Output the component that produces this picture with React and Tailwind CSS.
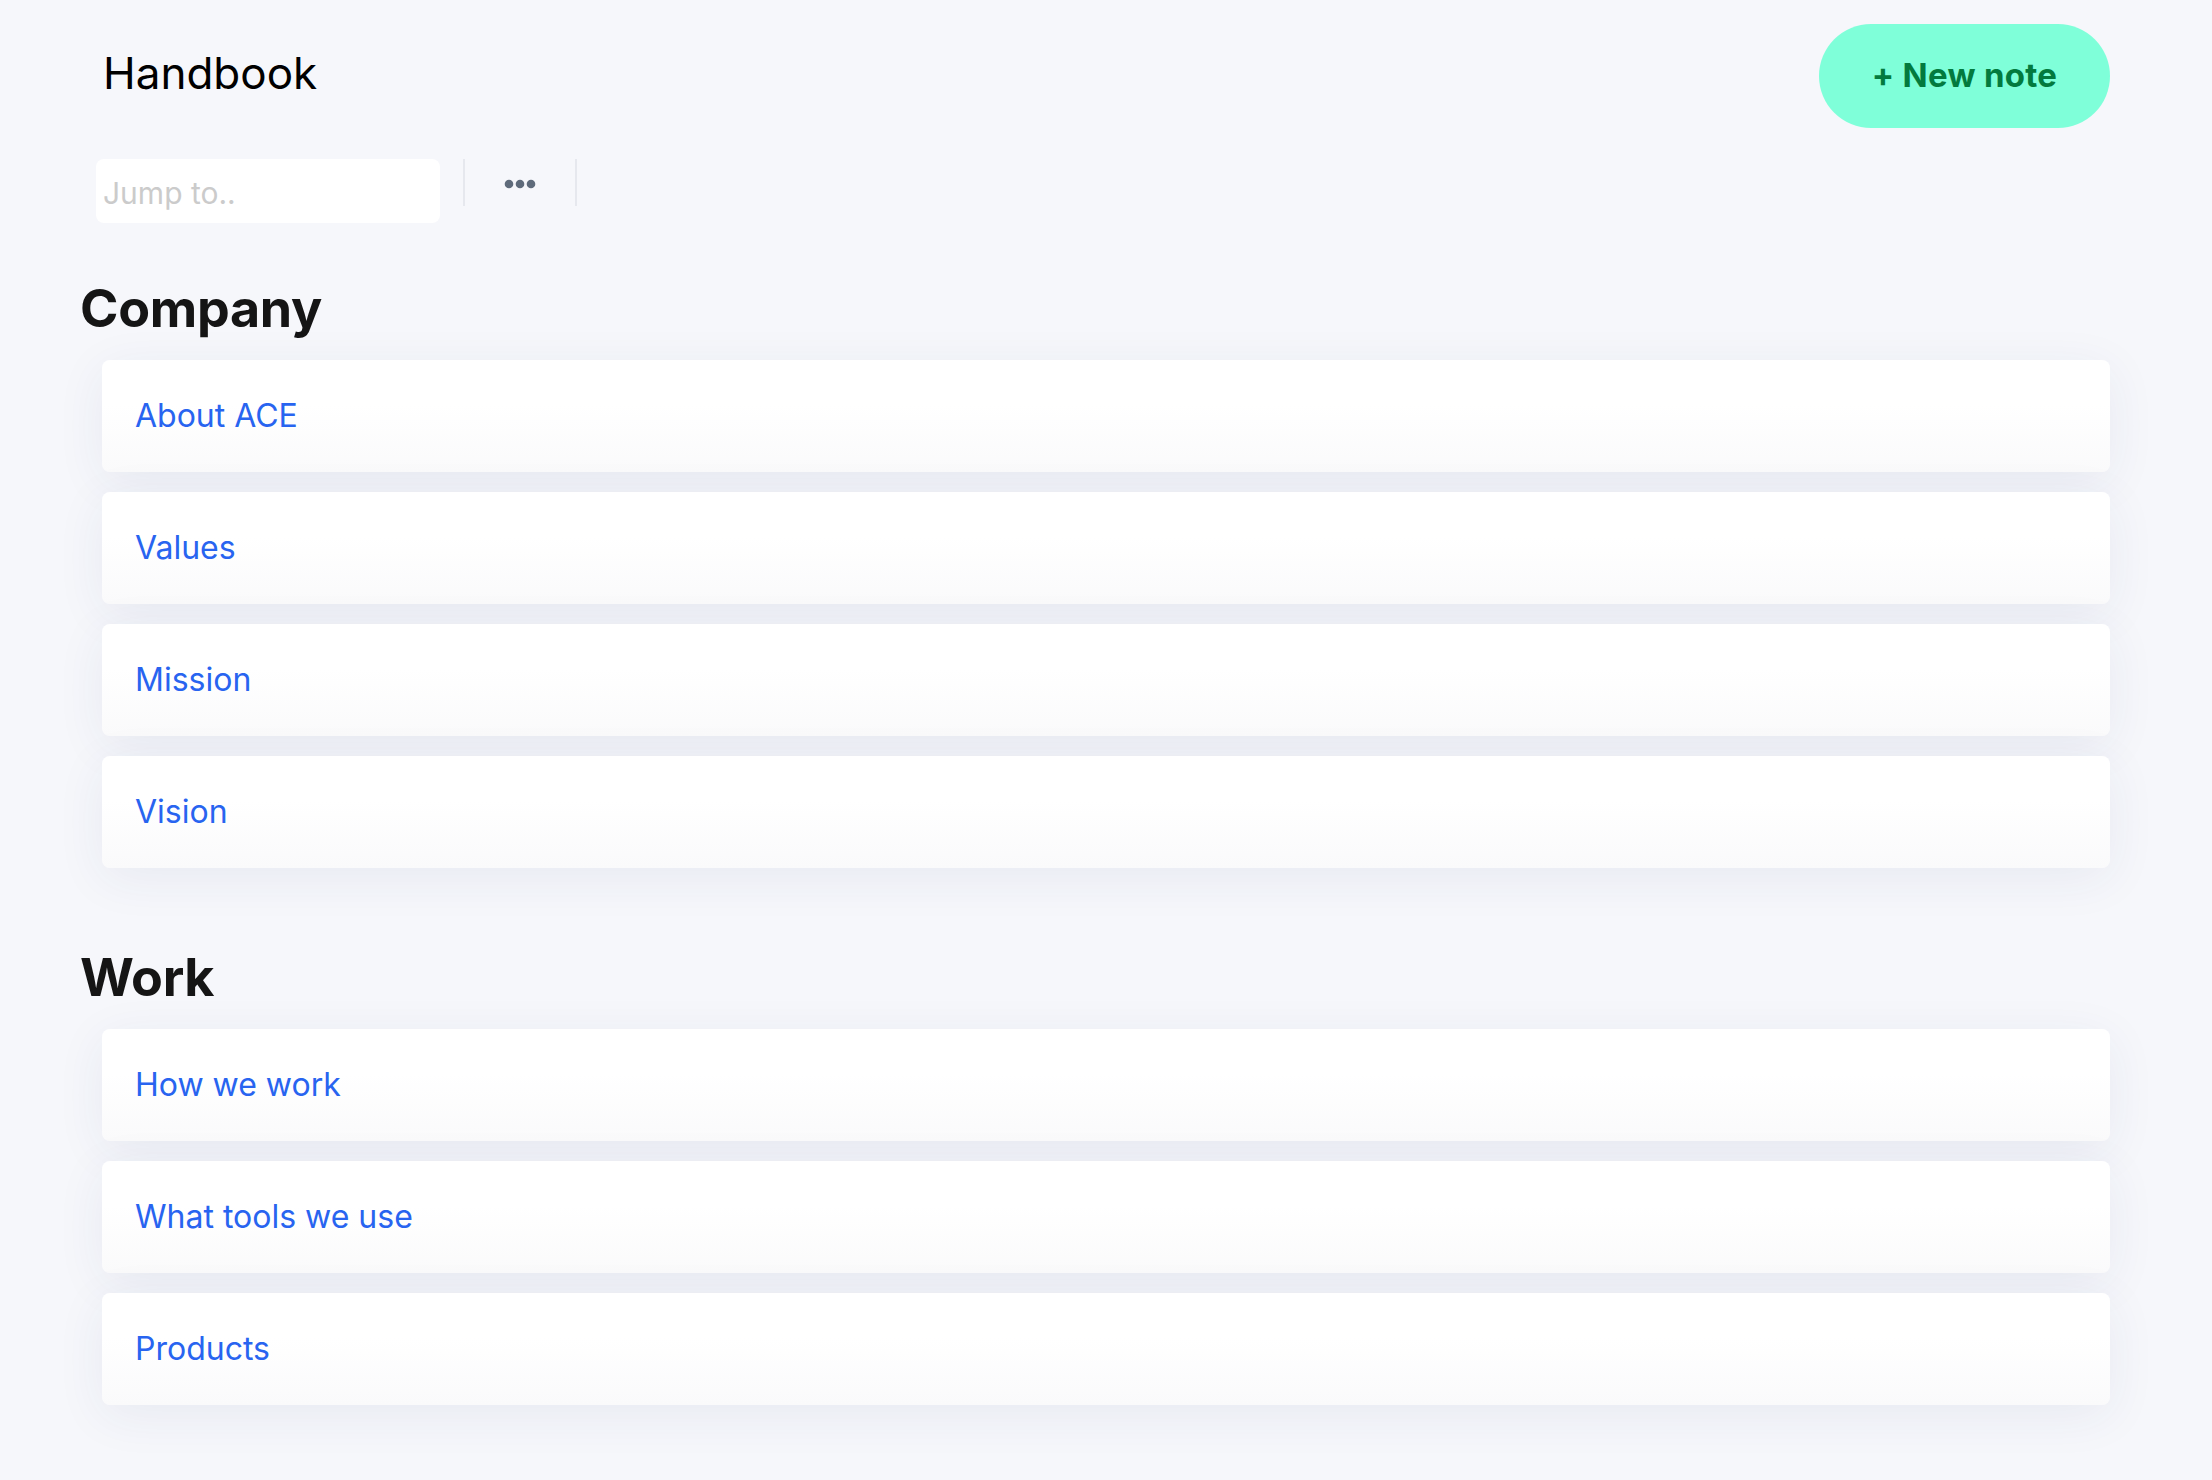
import React from "react";

const sections = [
  { title: "Company", notes: ["About ACE", "Values", "Mission", "Vision"] },
  { title: "Work", notes: ["How we work", "What tools we use", "Products"] },
];

function Dots() {
  return (
    <svg width="32" height="10" viewBox="0 0 32 10" fill="#5f6b7b">
      <circle cx="5" cy="5" r="4.3" />
      <circle cx="16" cy="5" r="4.3" />
      <circle cx="27" cy="5" r="4.3" />
    </svg>
  );
}

export default function App() {
  return (
    <div className="min-h-screen bg-[#f6f7fb] font-['Inter','Noto_Sans',sans-serif]">
      <div className="px-[102px] pt-[24px] pb-[74px]">
        {/* header */}
        <header className="flex items-center justify-between">
          <h1 className="ml-[1px] mb-[6px] text-[44px] leading-none text-black">Handbook</h1>
          <button className="h-[104px] w-[291px] rounded-full bg-[#7fffd9] text-[33px] font-bold tracking-[0.3px] text-[#037a3e]">
            + New note
          </button>
        </header>

        {/* toolbar */}
        <div className="mt-[31px] flex items-start">
          <input
            placeholder="Jump to.."
            className="-ml-[6px] h-[64px] w-[344px] rounded-[8px] bg-white pl-[7px] pt-[4px] text-[30px] text-gray-800 outline-none placeholder:text-[#cbcbcb]"
          />
          <button className="ml-[23px] flex h-[47px] w-[114px] items-center justify-center border-x-2 border-[#e6e8ee] pt-[2px]">
            <Dots />
          </button>
        </div>

        {sections.map((s, i) => (
          <section key={s.title} className={i === 0 ? "mt-[60px]" : "mt-[84px]"}>
            <h2 className="-ml-[22px] mb-[25px] text-[52px] font-bold leading-[52px] tracking-[-0.3px] text-[#151515]">{s.title}</h2>
            <div className="flex flex-col gap-[20px]">
              {s.notes.map((n) => (
                <a
                  key={n}
                  href="#"
                  className="flex h-[112px] items-center rounded-[8px] bg-gradient-to-b from-white from-40% to-[#fafafb] pl-[33px] text-[32px] text-[#2864f0] shadow-[0_10px_50px_rgba(40,50,110,0.07)]"
                >
                  {n}
                </a>
              ))}
            </div>
          </section>
        ))}
      </div>
    </div>
  );
}
